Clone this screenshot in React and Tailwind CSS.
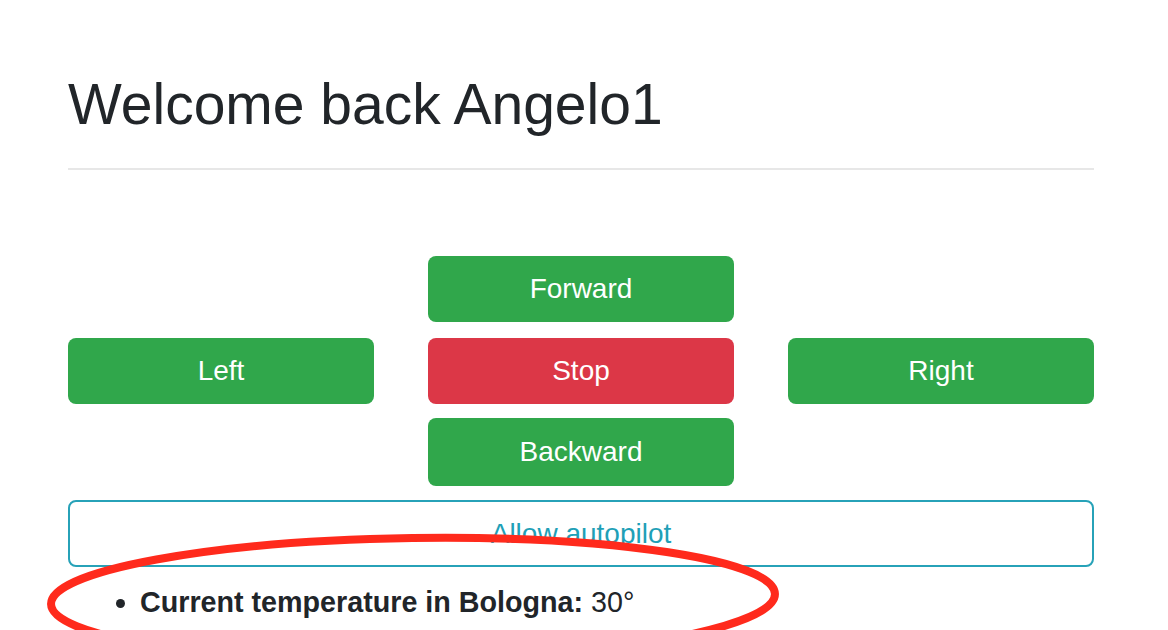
import React from 'react';

function GreenButton({ children }) {
  return (
    <button className="w-full h-[66px] rounded-lg bg-[#30a74b] text-white text-[28px] leading-none">
      {children}
    </button>
  );
}

export default function App() {
  return (
    <div className="relative min-h-[630px] bg-white text-[#212529] font-['Liberation_Sans',Arial,sans-serif] overflow-hidden">
      <div className="mx-[68px] w-[1026px] pt-[70px]">
        <h1 className="text-[57px] leading-[1.2] font-normal">Welcome back Angelo1</h1>

        <hr className="mt-[30px] border-0 border-t-2 border-[#e7e7e7]" />

        {/* pulsantiera */}
        <div className="mt-[86px] grid grid-cols-3 gap-x-[54px] items-center">
          <GreenButton>Left</GreenButton>
          <div className="flex flex-col">
            <GreenButton>Forward</GreenButton>
            <button className="mt-4 w-full h-[66px] rounded-lg bg-[#dc3747] text-white text-[28px] leading-none">
              Stop
            </button>
            <button className="mt-[14px] w-full h-[68px] rounded-lg bg-[#30a74b] text-white text-[28px] leading-none">
              Backward
            </button>
          </div>
          <GreenButton>Right</GreenButton>
        </div>

        <button className="mt-[14px] w-full h-[67px] rounded-lg border-2 border-[#27a2b8] text-[#1fa0b7] text-[28px] leading-none">
          Allow autopilot
        </button>

        <ul className="mt-[14px] pl-[72px] list-disc text-[28.7px] leading-[1.5]">
          <li>
            <b>Current temperature in Bologna:</b> 30°
          </li>
        </ul>
      </div>

      {/* annotazione a mano */}
      <svg
        className="absolute left-0 top-0 pointer-events-none"
        width="1168"
        height="700"
        viewBox="0 0 1168 700"
      >
        <ellipse
          cx="413"
          cy="599"
          rx="362"
          ry="61"
          transform="rotate(-0.8 413 599)"
          fill="none"
          stroke="#ff2a1c"
          strokeWidth="8"
        />
      </svg>
    </div>
  );
}
